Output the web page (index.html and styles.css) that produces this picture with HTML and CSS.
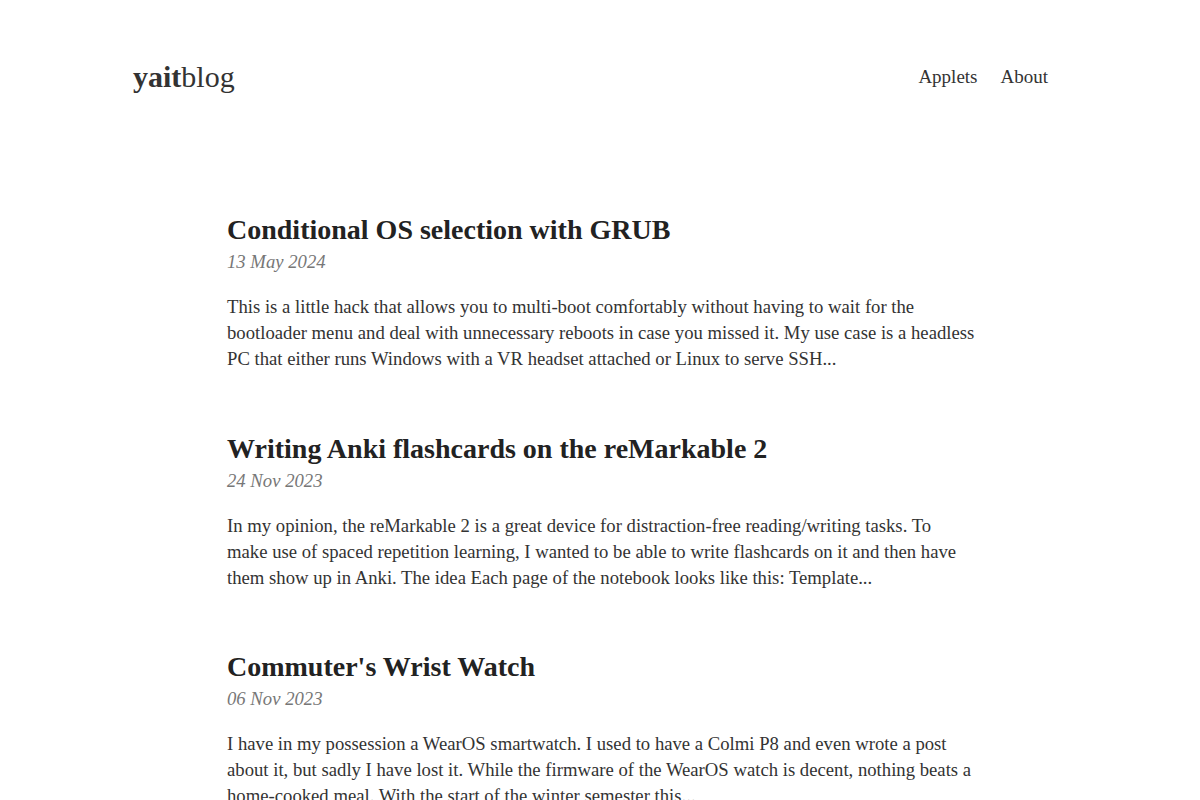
FILE: index.html
```html
<!DOCTYPE html>
<html lang="en">
<head>
  <meta charset="UTF-8" />
  <meta name="viewport" content="width=device-width, initial-scale=1.0"/>
  <title>yaitblog</title>
  <link rel="stylesheet" href="styles.css">
</head>
<body>

<header class="site-header">
  <a class="logo" href="#"><b>yait</b>blog</a>
  <nav class="site-nav">
    <a href="#">Applets</a>
    <a href="#">About</a>
  </nav>
</header>

<main class="posts">

  <article class="post">
    <h2 class="post-title"><a href="#">Conditional OS selection with GRUB</a></h2>
    <div class="post-date">13 May 2024</div>
    <p class="post-excerpt">This is a little hack that allows you to multi-boot comfortably without having to wait for the bootloader menu and deal with unnecessary reboots in case you missed it. My use case is a headless PC that either runs Windows with a VR headset attached or Linux to serve SSH...</p>
  </article>

  <article class="post">
    <h2 class="post-title"><a href="#">Writing Anki flashcards on the reMarkable 2</a></h2>
    <div class="post-date">24 Nov 2023</div>
    <p class="post-excerpt">In my opinion, the reMarkable 2 is a great device for distraction-free reading/writing tasks. To make use of spaced repetition learning, I wanted to be able to write flashcards on it and then have them show up in Anki. The idea Each page of the notebook looks like this: Template...</p>
  </article>

  <article class="post">
    <h2 class="post-title"><a href="#">Commuter's Wrist Watch</a></h2>
    <div class="post-date">06 Nov 2023</div>
    <p class="post-excerpt">I have in my possession a WearOS smartwatch. I used to have a Colmi P8 and even wrote a post about it, but sadly I have lost it. While the firmware of the WearOS watch is decent, nothing beats a home-cooked meal. With the start of the winter semester this...</p>
  </article>

</main>

</body>
</html>
```

FILE: styles.css
```css
body {
  margin: 0;
  font-family: "Liberation Serif", "Times New Roman", serif;
  background: #fff;
  color: #333;
}

a {
  color: inherit;
  text-decoration: none;
}

/* top bar with logo and links */
.site-header {
  display: flex;
  justify-content: space-between;
  align-items: center;
  padding: 60px 152px 0 133px;
}

.logo {
  font-size: 30px;
  line-height: 34px;
  color: #333;
}

.site-nav {
  display: flex;
  gap: 23px;
  font-size: 19px;
  line-height: 26px;
}

/* post list */
.posts {
  width: 748px;
  margin: 119px 0 0 calc(50% - 373px);
}

.post {
  margin-bottom: 59.5px;
}

.post-title {
  margin: 0;
  font-size: 28px;
  line-height: 34px;
  font-weight: bold;
  color: #222;
}

.post-date {
  margin-top: 2px;
  font-size: 18.7px;
  line-height: 26px;
  font-style: italic;
  color: #777;
}

.post-excerpt {
  margin: 19px 0 0;
  font-size: 18.7px;
  line-height: 26px;
  color: #333;
}
```
